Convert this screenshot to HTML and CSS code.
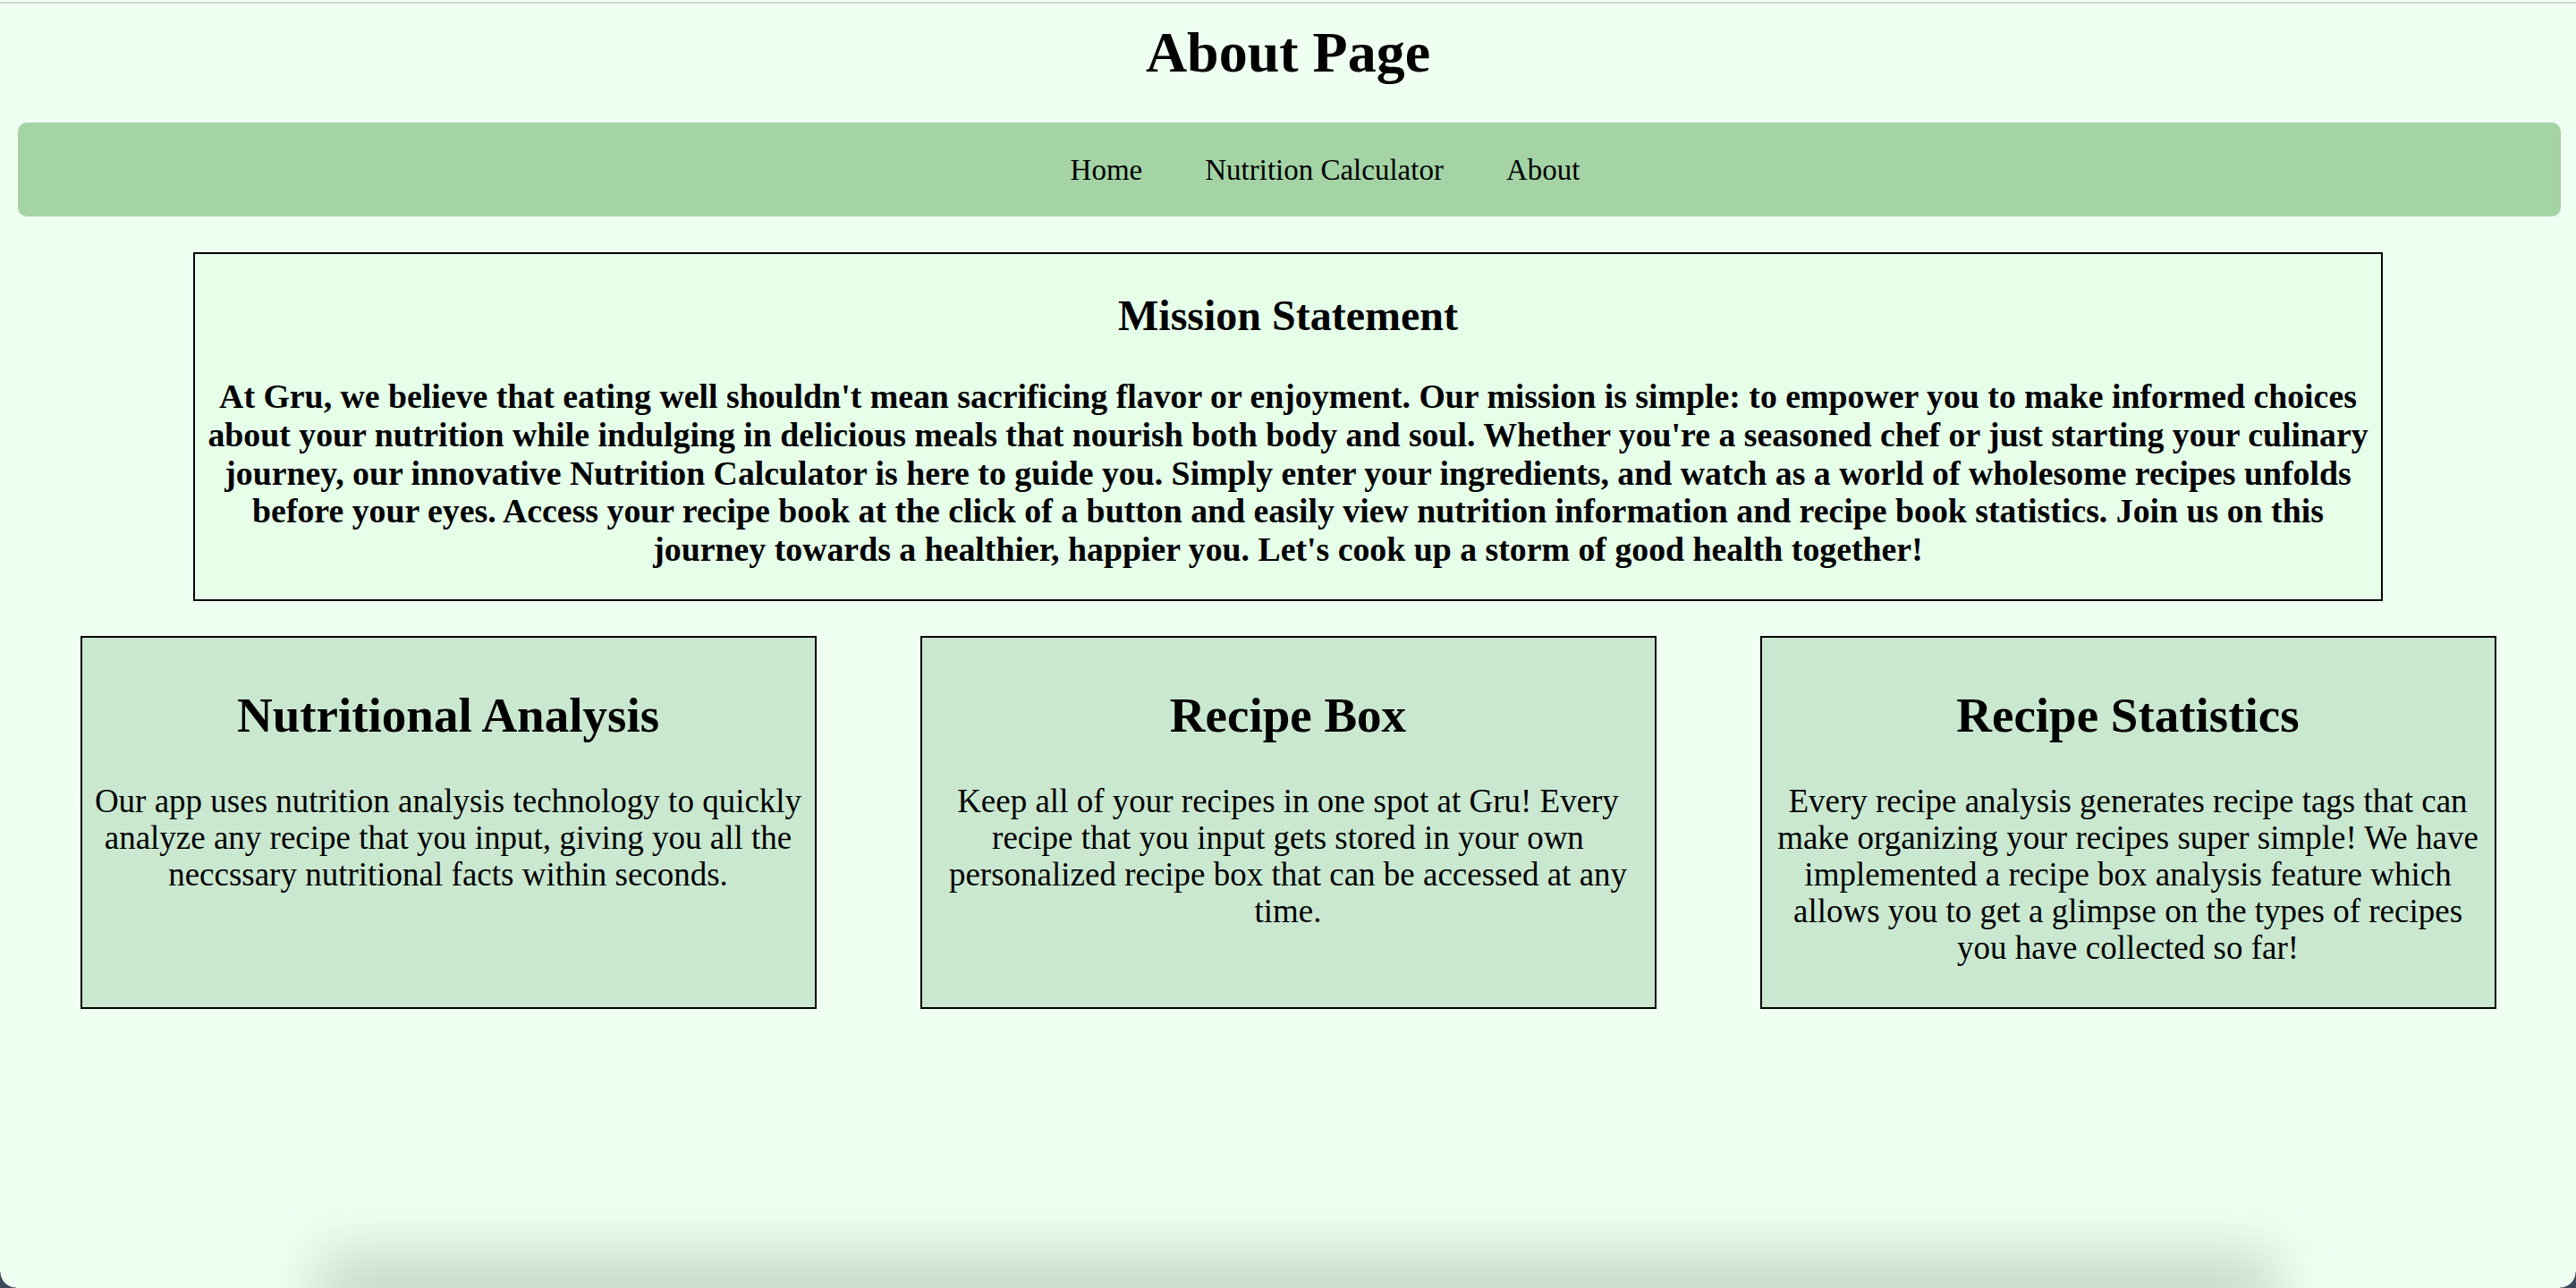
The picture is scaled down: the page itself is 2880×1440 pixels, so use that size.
FILE: index.html
```html
<!DOCTYPE html>
<html lang="en">
<head>
<meta charset="utf-8">
<title>About Page</title>
<link rel="stylesheet" href="styles.css">
</head>
<body>
<div class="topline"></div>
<h1 class="page-title">About Page</h1>
<nav class="navbar">
  <ul class="nav-list">
    <li><a href="#">Home</a></li>
    <li><a href="#">Nutrition Calculator</a></li>
    <li><a href="#">About</a></li>
  </ul>
</nav>
<section class="mission">
  <h2 class="mission-title">Mission Statement</h2>
  <p class="mission-text">At Gru, we believe that eating well shouldn't mean sacrificing flavor or enjoyment. Our mission is simple: to empower you to make informed choices about your nutrition while indulging in delicious meals that nourish both body and soul. Whether you're a seasoned chef or just starting your culinary journey, our innovative Nutrition Calculator is here to guide you. Simply enter your ingredients, and watch as a world of wholesome recipes unfolds before your eyes. Access your recipe book at the click of a button and easily view nutrition information and recipe book statistics. Join us on this journey towards a healthier, happier you. Let's cook up a storm of good health together!</p>
</section>
<section class="features">
  <div class="card">
    <h2 class="card-title">Nutritional Analysis</h2>
    <p class="card-text">Our app uses nutrition analysis technology to quickly analyze any recipe that you input, giving you all the neccssary nutritional facts within seconds.</p>
  </div>
  <div class="card">
    <h2 class="card-title">Recipe Box</h2>
    <p class="card-text">Keep all of your recipes in one spot at Gru! Every recipe that you input gets stored in your own personalized recipe box that can be accessed at any time.</p>
  </div>
  <div class="card">
    <h2 class="card-title">Recipe Statistics</h2>
    <p class="card-text">Every recipe analysis generates recipe tags that can make organizing your recipes super simple! We have implemented a recipe box analysis feature which allows you to get a glimpse on the types of recipes you have collected so far!</p>
  </div>
</section>
<div class="dock-shadow"></div>
<div class="corner corner-left"></div>
<div class="corner corner-right"></div>
</body>
</html>
```
FILE: styles.css
```css
html, body {
  margin: 0;
  padding: 0;
}

body {
  background: #effff1;
  font-family: "Liberation Serif", "Times New Roman", serif;
  color: #000;
  min-height: 1440px;
  overflow: hidden;
}

.topline {
  height: 2px;
  margin-top: 2px;
  background: #d2d4d2;
}

.page-title {
  margin: 18px 0 0;
  font-size: 64px;
  line-height: 74px;
  font-weight: bold;
  text-align: center;
}

.navbar {
  margin: 41px 17px 0 20px;
  height: 105px;
  background: #a4d4a6;
  border-radius: 10px;
  display: flex;
  align-items: center;
  justify-content: center;
}

.nav-list {
  list-style: none;
  margin: 0;
  padding: 0 0 0 80px;
  display: flex;
  gap: 70px;
}

.nav-list a {
  color: #000;
  text-decoration: none;
  font-size: 33px;
  line-height: 40px;
}

.mission {
  box-sizing: border-box;
  width: 85%;
  margin: 40px auto 0;
  border: 2px solid #000;
  background: #e6ffe9;
  padding: 0 2px;
  text-align: center;
}

.mission-title {
  margin: 41px 0 42px;
  font-size: 48px;
  line-height: 55px;
  font-weight: bold;
}

.mission-text {
  margin: 0 0 34px;
  font-size: 37.8px;
  line-height: 42.8px;
  font-weight: bold;
}

.features {
  margin-top: 39px;
  display: grid;
  grid-template-columns: repeat(3, 823px);
  column-gap: 116px;
  justify-content: center;
}

.card {
  box-sizing: border-box;
  border: 2px solid #000;
  background: #cae8d0;
  padding: 0 10px;
  text-align: center;
}

.card-title {
  margin: 55px 0 44px;
  font-size: 55px;
  line-height: 63px;
  font-weight: bold;
}

.card-text {
  margin: 0 0 46px;
  font-size: 37px;
  line-height: 41px;
}

.dock-shadow {
  position: fixed;
  left: 355px;
  right: 335px;
  bottom: -40px;
  height: 80px;
  background: rgba(40, 70, 50, 0.2);
  filter: blur(30px);
  pointer-events: none;
}

.corner {
  position: fixed;
  bottom: 0;
  width: 18px;
  height: 18px;
  pointer-events: none;
}

.corner-left {
  left: 0;
  background: radial-gradient(circle at 18px 0, transparent 17px, #3d4a5a 18px);
}

.corner-right {
  right: 0;
  background: radial-gradient(circle at 0 0, transparent 17px, #3d4a5a 18px);
}
```
